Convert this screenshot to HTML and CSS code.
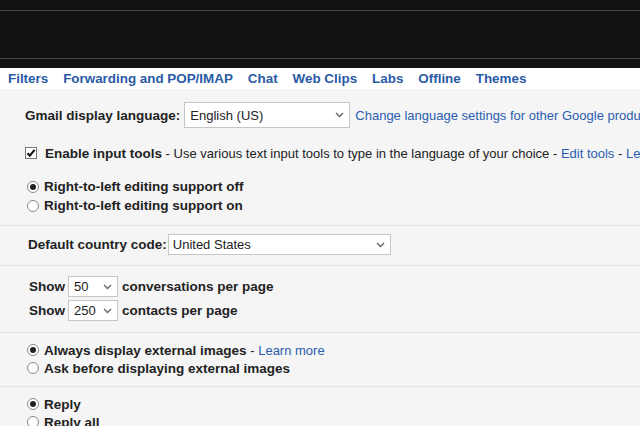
FILE: index.html
```html
<!DOCTYPE html>
<html lang="en">
<head>
    <meta charset="UTF-8">
    <title>Settings</title>
    <link rel="stylesheet" href="styles.css">
</head>
<body>

    <div class="topbar">
        <div class="topbar-inner"></div>
    </div>

    <div class="tabs">
        <a href="#">Filters</a>
        <a href="#">Forwarding and POP/IMAP</a>
        <a href="#">Chat</a>
        <a href="#">Web Clips</a>
        <a href="#">Labs</a>
        <a href="#">Offline</a>
        <a href="#">Themes</a>
    </div>

    <div class="settings">
        <div class="section first">
            <div class="row lang-row">
                <span class="label">Gmail display language:</span>
                <div class="select lang-select">
                    <span>English (US)</span>
                    <svg class="chev" width="9" height="6" viewBox="0 0 9 6"><path d="M1 1l3.5 3.5L8 1" fill="none" stroke="#666" stroke-width="1.4"/></svg>
                </div>
                <a href="#" class="link">Change language settings for other Google products</a>
            </div>
            <div class="row tools-row">
                <span class="checkbox">
                    <svg width="10" height="10" viewBox="0 0 10 10"><path d="M1.5 5.2l2.3 2.5L8.6 1.8" fill="none" stroke="#111" stroke-width="2"/></svg>
                </span>
                <span class="label">Enable input tools</span>
                <span class="plain">&nbsp;- Use various text input tools to type in the language of your choice -&nbsp;</span>
                <a href="#" class="link">Edit tools</a>
                <span class="plain">&nbsp;-&nbsp;</span>
                <a href="#" class="link">Learn more</a>
            </div>
            <div class="radios">
                <div class="radio-row"><span class="radio checked"></span><span class="label">Right-to-left editing support off</span></div>
                <div class="radio-row"><span class="radio"></span><span class="label">Right-to-left editing support on</span></div>
            </div>
        </div>

        <div class="section country">
            <div class="row">
                <span class="label">Default country code:</span>
                <div class="select country-select">
                    <span>United States</span>
                    <svg class="chev" width="9" height="6" viewBox="0 0 9 6"><path d="M1 1l3.5 3.5L8 1" fill="none" stroke="#666" stroke-width="1.4"/></svg>
                </div>
            </div>
        </div>

        <div class="section pages">
            <div class="row show-row">
                <span class="label">Show</span>
                <div class="select small-select">
                    <span>50</span>
                    <svg class="chev" width="9" height="6" viewBox="0 0 9 6"><path d="M1 1l3.5 3.5L8 1" fill="none" stroke="#666" stroke-width="1.4"/></svg>
                </div>
                <span class="label">conversations per page</span>
            </div>
            <div class="row show-row">
                <span class="label">Show</span>
                <div class="select small-select">
                    <span>250</span>
                    <svg class="chev" width="9" height="6" viewBox="0 0 9 6"><path d="M1 1l3.5 3.5L8 1" fill="none" stroke="#666" stroke-width="1.4"/></svg>
                </div>
                <span class="label">contacts per page</span>
            </div>
        </div>

        <div class="section images">
            <div class="radio-row"><span class="radio checked"></span><span class="label">Always display external images</span><span class="plain">&nbsp;-&nbsp;</span><a href="#" class="link">Learn more</a></div>
            <div class="radio-row"><span class="radio"></span><span class="label">Ask before displaying external images</span></div>
        </div>

        <div class="section reply">
            <div class="radio-row"><span class="radio checked"></span><span class="label">Reply</span></div>
            <div class="radio-row"><span class="radio"></span><span class="label">Reply all</span></div>
        </div>
    </div>

</body>
</html>
```

FILE: styles.css
```css
body {
    margin: 0;
    font-family: "Liberation Sans", Arial, sans-serif;
    font-size: 13px;
    color: #222;
    background-color: #f5f5f5;
    overflow: hidden;
}
a {
    text-decoration: none;
}
.topbar {
    background-color: #111;
    height: 68px;
    padding-top: 10px;
    box-sizing: border-box;
}
.topbar-inner {
    height: 47px;
    border-top: 1px solid #444;
    border-bottom: 1px solid #444;
}
.tabs {
    background-color: #fff;
    height: 21px;
    padding-left: 8px;
    display: flex;
    align-items: center;
    gap: 15px;
    white-space: nowrap;
    font-size: 13.4px;
}
.tabs a {
    color: #2a5aa6;
    font-weight: bold;
}
.section {
    border-bottom: 1px solid #e2e2e2;
    padding-left: 25px;
}
.row {
    display: flex;
    align-items: center;
    white-space: nowrap;
}
.label {
    font-weight: bold;
    font-size: 13.5px;
    flex-shrink: 0;
}
.plain {
    color: #222;
    flex-shrink: 0;
}
.link {
    color: #2a5db0;
    flex-shrink: 0;
}
.select {
    display: flex;
    align-items: center;
    justify-content: space-between;
    background-color: #fff;
    border: 1px solid #c6c6c6;
    box-sizing: border-box;
    padding: 0 5px;
    flex-shrink: 0;
}
.chev {
    flex-shrink: 0;
}
.first {
    padding-top: 13px;
    padding-bottom: 10px;
}
.lang-row {
    height: 26px;
}
.lang-select {
    width: 166px;
    height: 26px;
    margin: 0 5px 0 4px;
}
.tools-row {
    height: 18px;
    margin-top: 16px;
}
.checkbox {
    width: 12px;
    height: 12px;
    border: 1px solid #777;
    background-color: #fff;
    box-sizing: border-box;
    display: flex;
    align-items: center;
    justify-content: center;
    margin-right: 8px;
    flex-shrink: 0;
}
.radios {
    margin-top: 15px;
}
.radio-row {
    display: flex;
    align-items: center;
    height: 19px;
    white-space: nowrap;
    padding-left: 2px;
}
.radio {
    width: 12px;
    height: 12px;
    border: 1px solid #8a8a8a;
    border-radius: 50%;
    background-color: #fff;
    box-sizing: border-box;
    margin-right: 5px;
    display: flex;
    align-items: center;
    justify-content: center;
}
.radio.checked::after {
    content: "";
    width: 6px;
    height: 6px;
    border-radius: 50%;
    background-color: #222;
}
.country {
    padding: 8px 0 10px 28px;
}
.country-select {
    width: 223px;
    height: 21px;
    margin-left: 1px;
    padding-left: 4px;
}
.pages {
    padding: 10px 0 11px 29px;
}
.show-row {
    height: 21px;
}
.show-row + .show-row {
    margin-top: 3px;
}
.small-select {
    width: 50px;
    height: 21px;
    margin: 0 4px 0 3px;
}
.images {
    padding-top: 8px;
    padding-bottom: 9px;
}
.images .radio-row {
    height: 18px;
}
.reply {
    padding-top: 8px;
    border-bottom: none;
}
.reply .radio-row {
    height: 18px;
}
```
